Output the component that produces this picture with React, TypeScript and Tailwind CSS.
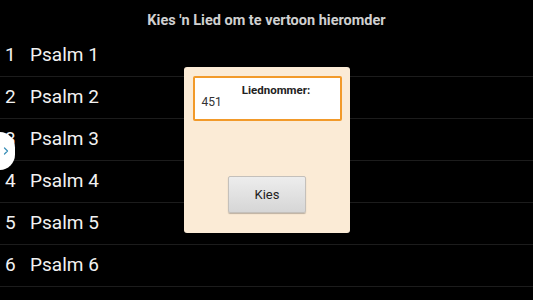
import { ChevronRight } from 'lucide-react'

const psalms = [1, 2, 3, 4, 5, 6]

export default function App() {
  return (
    <div
      className="relative w-[533px] h-[300px] overflow-hidden bg-black text-white"
      style={{ fontFamily: 'Roboto, "Liberation Sans", sans-serif' }}
    >
      {/* Title */}
      <div className="h-[35px] flex items-center justify-center pt-[6px] text-[14.5px] font-bold text-[#d0d0d0]">
        Kies 'n Lied om te vertoon hieromder
      </div>

      {/* List */}
      <ul>
        {psalms.map((n) => (
          <li key={n} className="h-[42px] flex items-center border-b border-[#1c1c1c] text-[19px] text-[#f2f2f2]">
            <span className="w-[30px] pl-[5px]">{n}</span>
            <span>Psalm {n}</span>
          </li>
        ))}
      </ul>

      {/* Side handle */}
      <div className="absolute left-[-16px] top-[132px] w-[31px] h-[38px] rounded-full bg-white flex items-center justify-end pr-[3px]">
        <ChevronRight className="w-[12px] h-[14px] text-[#3a8fb8]" strokeWidth={2.5} />
      </div>

      {/* Dialog */}
      <div className="absolute left-[184px] top-[67px] w-[166px] h-[166px] rounded-[3px] bg-[#fbebd6] flex flex-col items-center">
        <div className="mt-[9px] w-[149px] h-[45px] bg-white border-2 border-[#f29a2a] rounded-[2px] relative">
          <div className="text-center text-[11.5px] font-bold text-[#222] pt-[4px] pl-[18px]">Liednommer:</div>
          <div className="absolute left-[7px] top-[15px] text-[12px] text-[#333]">451</div>
        </div>
        <button className="mt-[55px] w-[78px] h-[37px] rounded-[2px] border border-[#c4c0bb] bg-gradient-to-b from-[#ededed] to-[#d6d6d6] shadow-[0_1px_1px_rgba(0,0,0,0.25)] text-[13px] text-[#222]">
          Kies
        </button>
      </div>
    </div>
  )
}
